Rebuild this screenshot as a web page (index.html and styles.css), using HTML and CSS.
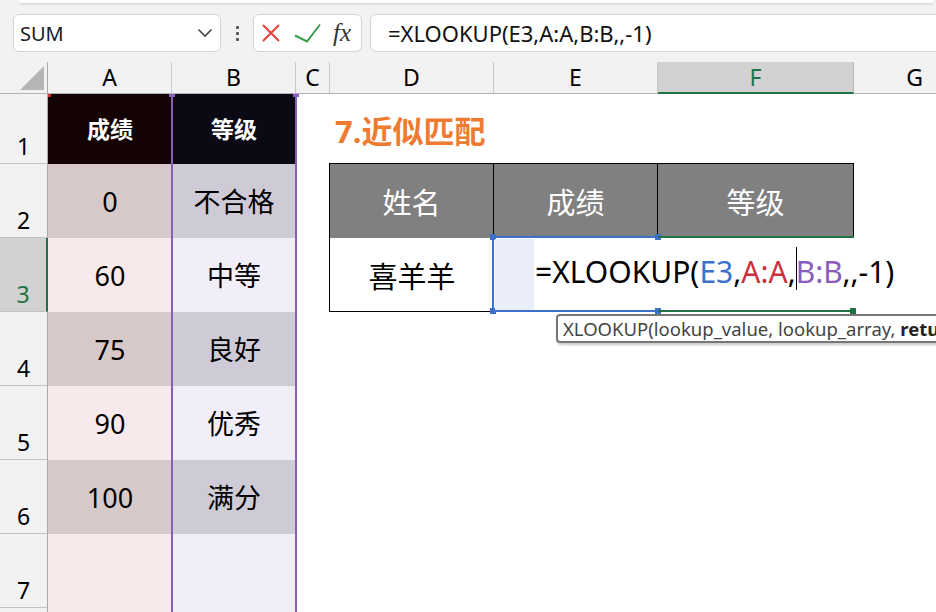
FILE: index.html
```html
<!DOCTYPE html>
<html lang="zh-CN">
<head>
<meta charset="utf-8">
<title>XLOOKUP 近似匹配</title>
<link rel="stylesheet" href="styles.css">
</head>
<body>
<div class="app">
  <div class="top">
    <div class="ribbon-edge"></div>
    <div class="fbar">
      <div class="namebox">
        <span>SUM</span>
        <svg class="chev" width="16" height="10" viewBox="0 0 16 10"><polyline points="1.5,1.5 8,8 14.5,1.5" fill="none" stroke="#444" stroke-width="1.6"/></svg>
      </div>
      <div class="vdots"><i></i><i></i><i></i></div>
      <div class="btnbox">
        <svg class="ic-x" width="22" height="22" viewBox="0 0 22 22"><path d="M3 3 L19 19 M19 3 L3 19" stroke="#e5403a" stroke-width="2" fill="none"/></svg>
        <svg class="ic-ok" width="28" height="22" viewBox="0 0 28 22"><polyline points="2,13.5 14,19.5 27,2.5" fill="none" stroke="#3a9b48" stroke-width="2"/></svg>
        <span class="fx">fx</span>
      </div>
      <div class="formula">=XLOOKUP(E3,A:A,B:B,,-1)</div>
    </div>
  </div>

  <div class="sheet">
    <div class="corner"><span class="tri"></span></div>
    <div class="ch">A</div>
    <div class="ch">B</div>
    <div class="ch">C</div>
    <div class="ch">D</div>
    <div class="ch">E</div>
    <div class="ch sel">F</div>
    <div class="ch">G</div>

    <div class="rh r1">1</div><div class="ca hd r1">成绩</div><div class="cb hd r1">等级</div>
    <div class="rh r2">2</div><div class="ca d r2">0</div><div class="cb d r2">不合格</div>
    <div class="rh sel r3">3</div><div class="ca l r3">60</div><div class="cb l r3">中等</div>
    <div class="rh r4">4</div><div class="ca d r4">75</div><div class="cb d r4">良好</div>
    <div class="rh r5">5</div><div class="ca l r5">90</div><div class="cb l r5">优秀</div>
    <div class="rh r6">6</div><div class="ca d r6">100</div><div class="cb d r6">满分</div>
    <div class="rh r7">7</div><div class="ca l r7"></div><div class="cb l r7"></div>
    <div class="rh r8">8</div><div class="ca l r8"></div><div class="cb l r8"></div>

    <div class="title">7.近似匹配</div>

    <div class="tbl">
      <div class="th">姓名</div>
      <div class="th">成绩</div>
      <div class="th">等级</div>
      <div class="td">喜羊羊</div>
      <div class="refbox"><i class="sq tl"></i><i class="sq tr"></i><i class="sq bl"></i><i class="sq br"></i></div>
      <div class="actbox"><i class="sq2"></i></div>
      <div class="edit"><span class="hl"></span><span class="ftext">=XLOOKUP(<span class="rb">E3</span>,<span class="rr">A:A</span>,<span class="cur"></span><span class="rp">B:B</span>,,-1)</span></div>
    </div>

    <div class="aref"></div>
    <div class="bsel"><i class="bq left"></i><i class="bq right"></i></div>
  </div>

  <div class="tip">XLOOKUP(lookup_value, lookup_array, <b>return_array</b>, [if_not_found], [match_mode], [search_mode])</div>
</div>
</body>
</html>
```

FILE: styles.css
```css
* { box-sizing: border-box; margin: 0; padding: 0; }
html, body { width: 936px; height: 612px; overflow: hidden; background: #fff; }
body { font-family: "Noto Sans", "Noto Sans CJK SC", sans-serif; color: #000; }

.app { position: relative; width: 936px; height: 612px; overflow: hidden; }

/* ---------- formula bar ---------- */
.top { height: 62px; background: #f2f2f2; }
.ribbon-edge {
  height: 3px; margin: 0 2px 0 19px; background: #fff;
  border-radius: 0 0 6px 6px; box-shadow: 0 1px 3px rgba(0,0,0,.16);
}
.fbar { display: flex; height: 38px; margin-top: 11px; padding-left: 13px; }
.namebox {
  width: 208px; background: #fff; border: 1px solid #d3d3d3; border-radius: 6px;
  display: flex; align-items: center; justify-content: space-between;
  padding: 0 7px 0 6px; font-size: 20px; color: #1a1a1a;
}
.vdots { width: 32px; display: flex; flex-direction: column; align-items: center; justify-content: center; gap: 3px; padding-left: 1px; }
.vdots i { display: block; width: 3px; height: 3px; background: #555; border-radius: 1px; }
.btnbox {
  width: 109px; background: #fff; border: 1px solid #d3d3d3; border-radius: 6px;
  display: flex; align-items: center; padding-left: 6px;
}
.ic-ok { margin-left: 11px; }
.fx { margin-left: 12px; font-family: "Liberation Serif", serif; font-style: italic; font-size: 25px; color: #333; line-height: 1; margin-top: -2px; }
.formula {
  flex: 1; margin-left: 8px; margin-right: -10px; background: #fff;
  border: 1px solid #d3d3d3; border-radius: 6px; display: flex; align-items: center;
  padding-left: 17px; font-size: 22px; color: #111; white-space: nowrap;
}

/* ---------- sheet grid ---------- */
.sheet {
  display: grid;
  grid-template-columns: 48px 124px 124px 34px 164px 164px 196px 122px;
  grid-template-rows: 32px 70px repeat(7, 74px);
  width: 976px;
}
.r1 { grid-row: 2; }
.r2 { grid-row: 3; }
.r3 { grid-row: 4; }
.r4 { grid-row: 5; }
.r5 { grid-row: 6; }
.r6 { grid-row: 7; }
.r7 { grid-row: 8; }
.r8 { grid-row: 9; }

.corner { background: #f2f2f2; border-right: 1px solid #a9a9a9; border-bottom: 1px solid #b3b3b3; padding: 4px 0 0 20px; }
.tri { display: block; width: 24px; height: 24px; background: #b6b6b6; clip-path: polygon(100% 0, 100% 100%, 0 100%); }
.ch {
  background: #f2f2f2; border-right: 1px solid #c9c9c9; border-bottom: 1px solid #b3b3b3;
  display: flex; align-items: center; justify-content: center; font-size: 23px; line-height: 1;
}
.ch.sel { background: #d2d2d2; color: #217346; border-bottom: 2px solid #217346; border-right-color: #b8b8b8; }

.rh {
  grid-column: 1; background: #f2f2f2; border-right: 1px solid #a9a9a9; border-bottom: 1px solid #c2c2c2;
  display: flex; align-items: flex-end; justify-content: center; font-size: 23px; line-height: 1; padding-bottom: 5px;
}
.rh.sel { background: #d2d2d2; color: #217346; border-right: 2px solid #217346; }

.ca, .cb { display: flex; align-items: center; justify-content: center; font-size: 27px; line-height: 1; }
.ca { grid-column: 2; }
.cb { grid-column: 3; }
.ca.hd, .cb.hd { color: #fff; font-weight: bold; font-size: 23px; }
.ca.hd { background: #130303; }
.cb.hd { background: #0b0a14; }
.ca.d { background: #d8c9c9; }
.ca.l { background: #f8eaea; }
.cb.d { background: #cfcbd6; }
.cb.l { background: #f1eef9; }

.aref { grid-column: 2; grid-row: 2; width: 3px; height: 3px; background: #d0312d; align-self: start; justify-self: start; }
.bsel {
  grid-column: 3; grid-row: 2 / 10; margin: 0 -1px; position: relative;
  border-left: 2px solid #8a5dbd; border-right: 2px solid #8a5dbd;
}
.bq { position: absolute; top: 0; width: 6px; height: 3px; background: #8a5dbd; }
.bq.left { left: -4px; }
.bq.right { right: -4px; }

/* ---------- title + table ---------- */
.title {
  grid-column: 5 / 8; grid-row: 2; display: flex; align-items: center; padding-left: 5px;
  font-size: 31px; font-weight: bold; color: #ee7b30; white-space: nowrap;
}
.tbl {
  grid-column: 5 / 8; grid-row: 3 / 5; margin: -1px 0 0 -1px;
  border-top: 1px solid #000; border-left: 1px solid #000;
  display: grid; grid-template-columns: 164px 164px 196px; grid-template-rows: 74px 74px;
}
.th {
  background: #808080; color: #fff; border-right: 1px solid #000;
  display: flex; align-items: center; justify-content: center; font-size: 29px;
}
.td { display: flex; align-items: center; justify-content: center; font-size: 29px; border-bottom: 1px solid #000; }
.edit {
  grid-column: 2; grid-row: 2; display: flex; align-items: center; white-space: nowrap;
  font-size: 30px; line-height: 1; position: relative; z-index: 3;
}
.edit .hl { flex: 0 0 39px; align-self: stretch; background: #e9eef8; margin: 1px 1px 2px 1px; }
.ftext { flex: 0 0 auto; }
.rb { color: #3c72c9; }
.rr { color: #c9313c; }
.rp { color: #8a5dbd; }
.cur { display: inline-block; width: 1px; height: 43px; background: #000; vertical-align: middle; margin: -8px -1px 0 0; position: relative; top: -3px; }

.refbox {
  grid-column: 2; grid-row: 2; margin: -2px 0 0 -2px; position: relative; z-index: 2;
  border-left: 2px solid #3d70c8; border-top: 2px solid #3d70c8; border-bottom: 2px solid #3d70c8;
}
.sq { position: absolute; width: 6px; height: 6px; background: #3d70c8; z-index: 4; }
.sq.tl { left: -4px; top: -4px; }
.sq.tr { right: -3px; top: -4px; }
.sq.bl { left: -4px; bottom: -4px; }
.sq.br { right: -3px; bottom: -4px; }
.actbox { grid-column: 3; grid-row: 2; margin-top: -2px; border-top: 2px solid #217346; border-bottom: 2px solid #217346; position: relative; z-index: 2; }
.sq2 { position: absolute; right: -2px; bottom: -4px; width: 6px; height: 6px; background: #217346; }

/* ---------- tooltip ---------- */
.tip {
  position: absolute; left: 556px; top: 314px; height: 29px; padding: 0 5px;
  border: 2px solid #777; border-radius: 4px; background: #fff;
  box-shadow: 1px 2px 3px rgba(0,0,0,.22);
  white-space: nowrap; line-height: 25px;
  font-size: 18.5px; color: #444; z-index: 5;
}
.tip b { color: #222; font-weight: bold; }
```
